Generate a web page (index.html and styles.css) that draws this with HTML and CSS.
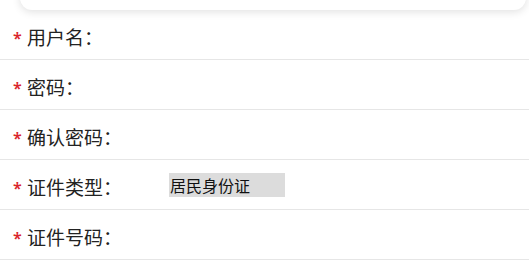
FILE: index.html
```html
<!DOCTYPE html>
<html lang="zh-CN">
<head>
<meta charset="utf-8">
<link rel="stylesheet" href="styles.css">
</head>
<body>
<div class="page">
  <div class="card"></div>
  <form class="form">
    <div class="row">
      <label class="label"><span class="req">*</span>用户名：</label>
    </div>
    <div class="row">
      <label class="label"><span class="req">*</span>密码：</label>
    </div>
    <div class="row">
      <label class="label"><span class="req">*</span>确认密码：</label>
    </div>
    <div class="row">
      <label class="label"><span class="req">*</span>证件类型：</label>
      <div class="select">居民身份证</div>
    </div>
    <div class="row">
      <label class="label"><span class="req">*</span>证件号码：</label>
    </div>
  </form>
</div>
</body>
</html>
```
FILE: styles.css
```css
html, body {
  margin: 0;
  padding: 0;
  background: #fff;
}
body {
  font-family: "Noto Sans CJK SC", "Noto Sans", sans-serif;
  color: #222;
  overflow: hidden;
}
.page {
  width: 529px;
}
.card {
  height: 40px;
  margin: -30px 3px 0 20px;
  background: #fff;
  border-radius: 12px;
  box-shadow: 0 2px 8px rgba(0, 0, 0, 0.12);
}
.form {
  margin: 0;
}
.row {
  display: flex;
  align-items: center;
  height: 49px;
  border-bottom: 1px solid #e6e6e6;
}
.label {
  display: flex;
  align-items: flex-start;
  width: 156px;
  padding-left: 12px;
  padding-top: 5px;
  font-size: 19px;
  line-height: 24px;
  box-sizing: border-box;
}
.req {
  color: #d9252b;
  font-family: "Noto Sans", sans-serif;
  font-size: 16px;
  font-weight: 600;
  line-height: 20px;
  width: 15px;
  padding-left: 1px;
  box-sizing: border-box;
  margin-top: 3px;
}
.select {
  width: 116px;
  height: 24px;
  margin-left: 13px;
  background: #dcdcdc;
  font-size: 16px;
  line-height: 24px;
  padding-left: 1px;
  box-sizing: border-box;
  color: #111;
}
```
